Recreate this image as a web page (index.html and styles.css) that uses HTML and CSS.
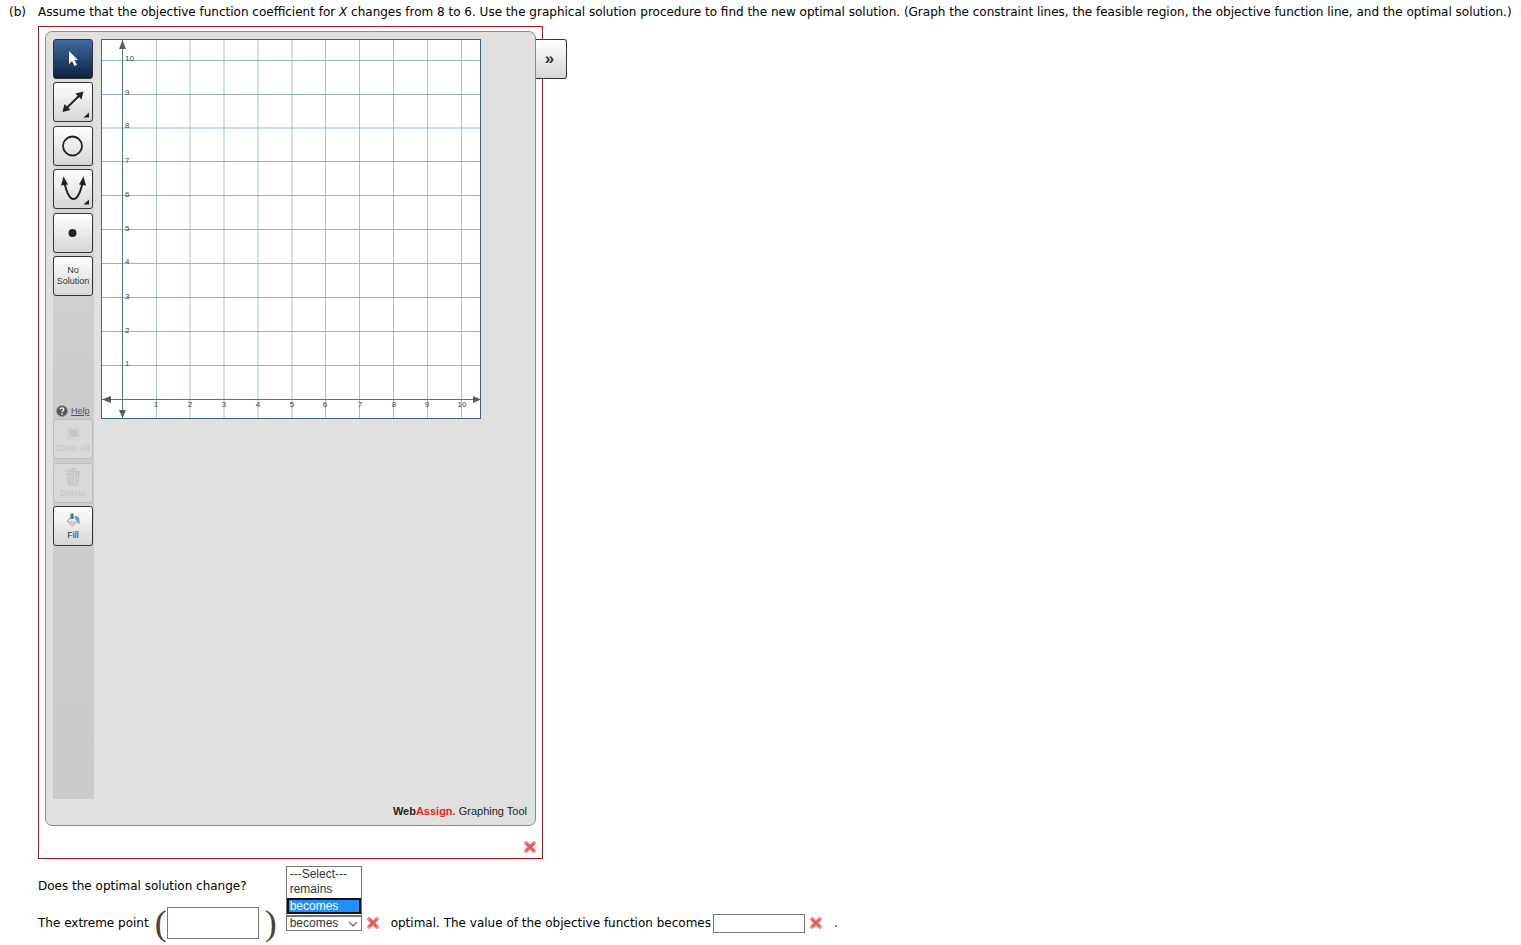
FILE: index.html
```html
<!DOCTYPE html>
<html lang="en">
<head>
<meta charset="utf-8">
<title>Graphing question</title>
<link rel="stylesheet" href="styles.css">
</head>
<body>
<svg class="defs" width="0" height="0" aria-hidden="true">
  <defs>
    <symbol id="wrong" viewBox="0 0 12 12"><path d="M2.2 2.2 9.8 9.8M9.8 2.2 2.2 9.8" stroke="#f29090" stroke-width="4" stroke-linecap="square" fill="none"/><path d="M2.3 2.3 9.7 9.7M9.7 2.3 2.3 9.7" stroke="#e85858" stroke-width="2.4" fill="none"/></symbol>
  </defs>
</svg>
<main class="question">
  <div class="part">(b)</div>
  <div class="body">
    <p class="prompt">Assume that the objective function coefficient for <i>X</i> changes from 8 to 6. Use the graphical solution procedure to find the new optimal solution. (Graph the constraint lines, the feasible region, the objective function line, and the optimal solution.)</p>
    <section class="answer">
      <div class="tool">
        <div class="workspace">
          <div class="toolbar">
            <div class="group draw">
              <button class="btn active" aria-label="Select"><svg width="38" height="38" viewBox="0 0 38 38"><path d="M15 11v13l3-3 2.5 5 2.5-1.2L20.5 20H24z" fill="#fff"/></svg></button>
              <button class="btn" aria-label="Line"><svg width="38" height="38" viewBox="0 0 38 38"><path d="M12 25.500 26 12" stroke="#222" stroke-width="2"/><path d="M29.500 8.500 27.500 16.500 21.500 10.500zM8.500 29 10.500 21 16.500 27z" fill="#222"/><path d="M35 29.500v5h-5.500z" fill="#222"/></svg></button>
              <button class="btn" aria-label="Circle"><svg width="38" height="38" viewBox="0 0 38 38"><circle cx="18.500" cy="19" r="9.500" fill="none" stroke="#222" stroke-width="1.800"/></svg></button>
              <button class="btn" aria-label="Parabola"><svg width="38" height="38" viewBox="0 0 38 38"><path d="M10.500 13C13 24 16 29 19.500 29S26 24 28.500 13" fill="none" stroke="#222" stroke-width="2"/><path d="M9.500 6.500 14 14.500 7 15.500zM29.500 6.500 32 15.500 25 14.500z" fill="#222"/><path d="M35 29.500v5h-5.500z" fill="#222"/></svg></button>
              <button class="btn" aria-label="Point"><svg width="38" height="38" viewBox="0 0 38 38"><circle cx="18.500" cy="19" r="4" fill="#222"/></svg></button>
              <button class="btn words">No<br>Solution</button>
            </div>
            <a class="help" href="#help"><svg width="12" height="12" viewBox="0 0 12 12"><circle cx="6" cy="6" r="5.500" fill="#555" stroke="#999"/><path d="M4.200 4.600C4.200 2.200 8 2.400 7.800 4.600 7.700 5.700 6 5.700 6 7.200M6 8.300v1.400" stroke="#fff" stroke-width="1.300" fill="none"/></svg><span>Help</span></a>
            <div class="group edit">
              <button class="btn stacked" disabled><svg width="16" height="16" viewBox="0 0 16 16"><path d="M2 2h12v12H2z" fill="none" stroke="#ccc" stroke-dasharray="2 1"/><path d="M4 4h9v8H4z" fill="#c8c8c8"/></svg><span>Clear All</span></button>
              <button class="btn stacked" disabled><svg width="16" height="18" viewBox="0 0 16 18"><path d="M1 2.500 15 4M6 2l1-1h3l1 2M2.500 5.500 4 17h8.500L14 5.500zM5.500 6v10M8.200 6v10M11 6v10" fill="none" stroke="#c5c5c5" stroke-width="1.500"/></svg><span>Delete</span></button>
              <button class="btn stacked"><svg width="16" height="16" viewBox="0 0 16 16"><path d="M2 9 8 3.500 13 9 7.500 14z" fill="#eee" stroke="#999"/><path d="M3 9h9l-4.500 4.500z" fill="#ccc"/><path d="M10 4c4 0 5 2 4.500 8-2 0-2.500-4-4.500-5z" fill="#70a0c8"/><path d="M5.500 1.500h3V7h-3z" fill="#3478b8"/></svg><span>Fill</span></button>
            </div>
          </div>
          <svg class="graph" width="380" height="380" viewBox="0 0 380 380" role="img" aria-label="Empty coordinate grid">
            <rect x=".5" y=".5" width="379" height="379" fill="#fff" stroke="#376488"/>
            <path class="vgrid" d="M55.500 1v378M89 1v378M123 1v378M157 1v378M191 1v378M224.500 1v378M258.500 1v378M292.500 1v378M326.500 1v378M360.500 1v378"/>
            <path class="hgrid" d="M1 326.500h378M1 292.500h378M1 258.500h378M1 224.500h378M1 190.500h378M1 156.500h378M1 122.500h378M1 89h378M1 55.500h378M1 21.500h378"/>
            <path class="axis" d="M21.500 1v378M1 360.500h378"/>
            <path class="heads" d="M21.500 1 25 10h-7zM21.500 379 25 371h-7zM1 360.500 10 357v7zM380 360.500 372 357v7z"/>
            <g class="num"><text x="24" y="327">1</text><text x="24" y="294">2</text><text x="24" y="260">3</text><text x="24" y="225">4</text><text x="24" y="192">5</text><text x="24" y="158">6</text><text x="24" y="124">7</text><text x="24" y="89">8</text><text x="24" y="56">9</text><text x="24" y="22">10</text></g>
            <g class="num mid"><text x="55" y="368">1</text><text x="89" y="368">2</text><text x="123" y="368">3</text><text x="157" y="368">4</text><text x="191" y="368">5</text><text x="224" y="368">6</text><text x="259" y="368">7</text><text x="293" y="368">8</text><text x="326" y="368">9</text><text x="361" y="368">10</text></g>
          </svg>
        </div>
        <div class="brand"><b>Web</b><b class="redword">Assign.</b> Graphing Tool</div>
        <button class="expand" aria-label="Expand panel">»</button>
      </div>
      <svg class="wrong" role="img" aria-label="Incorrect"><use href="#wrong"/></svg>
    </section>
    <div class="line first">Does the optimal solution change?</div>
    <div class="line second">
      <label for="point">The extreme point</label>
      <span class="paren open">(</span>
      <input class="point" id="point" type="text">
      <span class="paren close">)</span>
      <div class="picker">
        <select aria-label="Remains or becomes"><option>---Select---</option><option>remains</option><option selected>becomes</option></select>
        <svg class="chevron" width="10" height="6" viewBox="0 0 10 6"><path d="M1 1l4 4 4-4" fill="none" stroke="#666" stroke-width="1.200"/></svg>
        <ul class="menu" role="listbox" aria-label="Choices"><li role="option">---Select---</li><li role="option">remains</li><li class="chosen" role="option" aria-selected="true">becomes</li></ul>
      </div>
      <svg class="wrong" role="img" aria-label="Incorrect"><use href="#wrong"/></svg>
      <label class="value-label" for="value">optimal. The value of the objective function becomes</label>
      <input class="value" id="value" type="text">
      <svg class="wrong" role="img" aria-label="Incorrect"><use href="#wrong"/></svg>
      <span class="dot">.</span>
    </div>
  </div>
</main>
</body>
</html>
```
FILE: styles.css
```css
* { box-sizing: border-box; }
body { margin: 0; background: #fff; color: #000; font: 12px/16px Verdana, "DejaVu Sans", sans-serif; }
.defs { position: absolute; }
.question { display: flex; padding: 4px 8px 0 9px; }
.part { flex: 0 0 29px; }
.body { flex: 1; min-width: 0; }
.prompt { margin: 0 0 6px; }
.answer { width: 505px; padding: 4px 6px 5px; border: 1px solid #a01c20; display: flex; flex-direction: column; }
.answer > .wrong { align-self: flex-end; margin: 15px 0 0; }
.tool { position: relative; padding: 7px 7px 6px; background: #e0e0de; border: 1px solid #8c8c8c; border-radius: 7px; font-family: Arial, "Liberation Sans", sans-serif; }
.workspace { display: flex; align-items: flex-start; gap: 7px; }
.toolbar { display: flex; flex-direction: column; width: 41px; min-height: 760px; background: linear-gradient(#dedede, #cccccc 45%, #cbcbcb); }
.group { display: flex; flex-direction: column; justify-content: space-between; }
.draw { min-height: 257px; }
.edit { min-height: 127px; }
.btn, .expand { padding: 0; border: 1px solid #333; background: linear-gradient(#fff, #eeefee 40%, #d4d7d3); color: #333; font-family: inherit; }
.btn { display: flex; align-items: center; justify-content: center; width: 40px; height: 40px; border-radius: 3px; white-space: nowrap; }
.btn.active { background: linear-gradient(#416b9f, #264a78 45%, #0d203d); }
.btn.words { display: block; font-size: 9px; line-height: 11px; }
.btn.stacked { flex-direction: column; gap: 2px; font-size: 9px; line-height: 10px; }
.btn:disabled { background: #d9d9d8; border-color: #bdbdbd; color: #c5c5c5; }
.help { display: flex; align-items: center; gap: 3px; height: 16px; margin-top: 107px; padding-left: 3px; color: #555; font-size: 9px; }
.graph { display: block; }
.vgrid { stroke: #a1c2d2; stroke-width: 1; fill: none; }
.hgrid { stroke: #8fb5c9; stroke-width: 1; fill: none; }
.axis { stroke: #50758d; stroke-width: 1; fill: none; }
.heads { fill: #555b61; }
.num { font-size: 8px; fill: #444; }
.mid { text-anchor: middle; }
.brand { margin-top: 5px; padding-right: 1px; text-align: right; font-size: 11px; line-height: 15px; color: #222; }
.redword { color: #ed1c24; }
.expand { position: absolute; left: calc(100% + 1px); top: 7px; width: 31px; height: 40px; padding-right: 3px; border-left: 0; border-radius: 0 3px 3px 0; font-size: 17px; font-weight: bold; }
.wrong { flex: none; width: 12px; height: 12px; }
.line { display: flex; align-items: center; white-space: nowrap; }
.first { height: 36px; margin-top: 9px; }
.second { height: 38px; }
.paren { color: #444; font: 36px/34px "Liberation Serif", serif; }
.open { margin-left: 6px; }
.close { margin-left: 6px; }
input { background: #fff; border: 1px solid #767676; }
.point { width: 92px; height: 32px; }
.picker { position: relative; margin: 0 5px 0 9px; font: 12px/15px Arial, "Liberation Sans", sans-serif; }
select { display: block; appearance: none; width: 76px; height: 15px; padding: 0 3px; border: 1px solid #767676; border-radius: 0; background: #fff; color: #333; font: 12px/13px Arial, "Liberation Sans", sans-serif; }
.chevron { position: absolute; right: 4px; top: 5px; }
.menu { position: absolute; left: 0; bottom: 100%; width: 76px; margin: 0; padding: 0 0 1px; list-style: none; background: #fff; border: 1px solid #767676; color: #333; }
.menu li { padding: 0 3px; }
.menu .chosen { margin-top: 1px; padding: 0 1px; line-height: 12px; background: #1e90ff; border: 2px solid #101010; color: #fff; }
.value-label { margin-left: 12px; }
.value { width: 92px; height: 19px; margin: 0 5px 0 2px; }
.dot { margin-left: 12px; }
```
